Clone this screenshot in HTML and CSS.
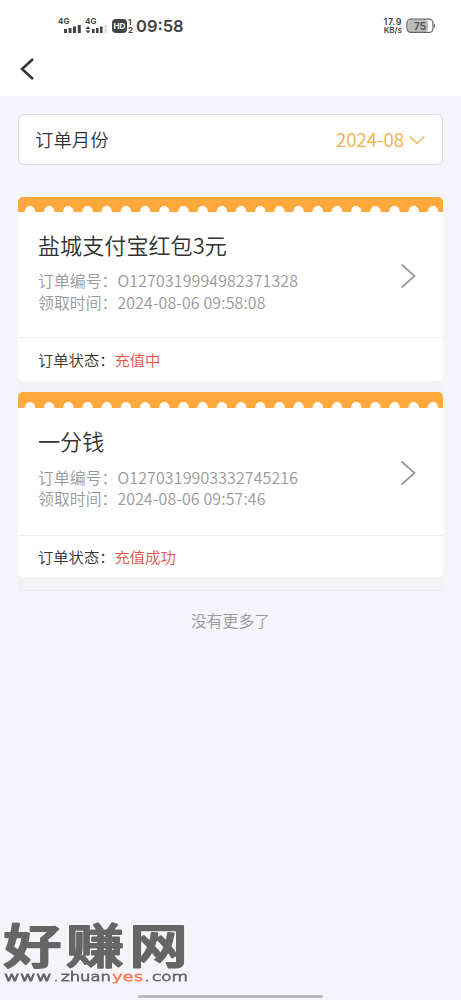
FILE: index.html
```
<!DOCTYPE html>
<html lang="zh-CN">
<head>
  <meta charset="UTF-8">
  <meta name="viewport" content="width=device-width, initial-scale=1.0">
  <title>订单</title>
  <link rel="stylesheet" href="styles.css">
</head>
<body>
  <div class="status-bar">
    <svg class="signal" width="50" height="18" viewBox="0 0 50 18">
      <text x="0" y="7">4G</text>
      <path d="M6 12h3v4h-3zM10.500 11h3v5h-3zM15 9.500h3v6.500h-3zM19.800 8h3v8h-3z"/>
      <text x="27" y="7">4G</text>
      <path d="M27.500 12l2.500-3 2.500 3zM27.500 13.500l2.500 3 2.500-3zM34 12h2.600v4h-2.600zM38 11h2.600v5h-2.600zM42 9.500h2.600v6.500h-2.600z"/>
      <path class="weak" d="M46.500 8h2.600v8h-2.600z"/>
    </svg>
    <span class="hd">HD</span>
    <span class="sims"><span>1</span><span>2</span></span>
    <span class="clock">09:58</span>
    <span class="speed"><span>17.9</span><span class="unit">KB/s</span></span>
    <svg class="battery" width="30" height="16" viewBox="0 0 30 16">
      <rect class="level" x="2" y="2" width="20" height="12" rx="3"/>
      <rect class="shell" x="1" y="1.200" width="26" height="13.200" rx="4"/>
      <path d="M28 5.500q2 2.300 0 4.600z"/>
      <text x="14" y="11.500">75</text>
    </svg>
  </div>

  <div class="nav">
    <svg width="17" height="24" viewBox="0 0 17 24">
      <path d="M15 2L4 12l11 10"/>
    </svg>
  </div>

  <div class="container">
    <div class="month">
      <span class="month-label">订单月份</span>
      <span class="month-value">2024-08</span>
      <svg class="arrow-down" width="16" height="10" viewBox="0 0 16 10">
        <path d="M.7 1.500L8 8.500l7.300-7"/>
      </svg>
    </div>

    <div class="orders">
      <div class="card">
        <div class="stamp"></div>
        <div class="main">
          <div class="info">
            <h2>盐城支付宝红包3元</h2>
            <p>订单编号：<span>O1270319994982371328</span></p>
            <p>领取时间：<span>2024-08-06 09:58:08</span></p>
          </div>
          <svg class="arrow" width="16" height="26" viewBox="0 0 16 26">
            <path d="M1.500 1.500L14.500 13 1.500 24.500"/>
          </svg>
        </div>
        <div class="state">订单状态：<span>充值中</span></div>
      </div>

      <div class="card second">
        <div class="stamp"></div>
        <div class="main">
          <div class="info">
            <h2>一分钱</h2>
            <p>订单编号：<span>O1270319903332745216</span></p>
            <p>领取时间：<span>2024-08-06 09:57:46</span></p>
          </div>
          <svg class="arrow" width="16" height="26" viewBox="0 0 16 26">
            <path d="M1.500 1.500L14.500 13 1.500 24.500"/>
          </svg>
        </div>
        <div class="state">订单状态：<span>充值成功</span></div>
      </div>
    </div>

    <p class="no-more">没有更多了</p>
  </div>

  <svg class="watermark" width="196" height="80" viewBox="0 0 196 80">
    <text class="name" transform="translate(0 54.500) scale(1 .81)" x="3.500 66 129.500" y="0">好赚网</text>
    <g class="site">
      <text x="4" y="73" textLength="48" lengthAdjust="spacingAndGlyphs">www</text>
      <text x="54" y="73">.</text>
      <text x="61" y="73" textLength="50" lengthAdjust="spacingAndGlyphs">zhuan</text>
      <text class="yes" x="112" y="73" textLength="31" lengthAdjust="spacingAndGlyphs">yes</text>
      <text x="145" y="73">.</text>
      <text x="152" y="73" textLength="36" lengthAdjust="spacingAndGlyphs">com</text>
    </g>
  </svg>
  <div class="home-bar"></div>
</body>
</html>
```
FILE: styles.css
```
* {
  box-sizing: border-box;
}

body {
  margin: 0;
  height: 1000px;
  position: relative;
  overflow: hidden;
  font-family: 'Noto Sans CJK SC', sans-serif;
  font-weight: 350;
  background-color: #f4f4fa;
  color: #333;
}

svg {
  display: block;
}

h2,
p {
  margin: 0;
  font-weight: inherit;
}

/* Status bar */
.status-bar {
  display: flex;
  align-items: center;
  height: 52px;
  padding: 0 25px 0 58px;
  background-color: #fff;
  font-family: Inter, sans-serif;
  font-weight: 700;
  color: #444;
}

.signal {
  fill: #444;
  font-size: 8px;
}

.signal .weak {
  fill: #ddd;
}

.hd {
  width: 15px;
  height: 14px;
  margin-left: 4px;
  border-radius: 4px;
  background-color: #444;
  color: #fff;
  font-size: 8px;
  line-height: 14px;
  text-align: center;
}

.sims {
  display: flex;
  flex-direction: column;
  margin-left: 1px;
  font-size: 8px;
  line-height: 8px;
}

.clock {
  margin-left: 3px;
  font-size: 16.5px;
  font-weight: 600;
}

.speed {
  display: flex;
  flex-direction: column;
  align-items: flex-end;
  margin-left: auto;
  font-size: 9px;
  line-height: 8px;
  font-weight: 600;
}

.speed span:first-child {
  letter-spacing: 0.5px;
}

.speed .unit {
  font-size: 8px;
}

.battery {
  margin-left: 4px;
  fill: #555;
}

.battery .level {
  fill: #bbb;
}

.battery .shell {
  fill: none;
  stroke: #666;
  stroke-width: 1.3;
}

.battery text {
  font-size: 10px;
  text-anchor: middle;
}

/* Nav */
.nav {
  height: 44px;
  padding: 5px 0 0 18px;
  background-color: #fff;
}

.nav path {
  fill: none;
  stroke: #333;
  stroke-width: 2.5;
}

.container {
  padding: 18px 18px 0;
}

/* Month picker */
.month {
  display: flex;
  align-items: center;
  height: 51px;
  padding: 0 17px 2px 16px;
  border: 1px solid #dcdce6;
  border-radius: 6px;
  background-color: #fff;
}

.month-label {
  flex: 1;
  font-size: 18.4px;
}

.month-value {
  font-size: 18.7px;
  color: #f5ac49;
}

.arrow-down {
  margin: 2px 0 0 5px;
}

.arrow-down path {
  fill: none;
  stroke: #f5ac49;
  stroke-width: 1.2;
}

/* Orders */
.orders {
  margin-top: 32px;
  padding-bottom: 13px;
  border-bottom: 1px solid #ececef;
  background: linear-gradient(#f3f3f5, #f3f3f5) 0 100% / 100% 220px no-repeat;
}

.card {
  height: 184px;
  display: flex;
  flex-direction: column;
  border-radius: 5px;
  overflow: hidden;
  background-color: #fff;
}

.stamp {
  height: 15px;
  background: radial-gradient(circle at 12px 14px, #fff 4.7px, #ffa83b 5.3px) 0 0 / 19.2px 100%;
}

.main {
  display: flex;
  align-items: center;
  height: 126px;
  padding: 0 27px 0 20px;
  border-bottom: 1px solid #efeff2;
}

.info {
  flex: 1;
  padding-bottom: 8px;
}

.info h2 {
  font-size: 22.1px;
  line-height: 32px;
  margin-bottom: 10px;
}

.info p {
  font-size: 15.9px;
  line-height: 22px;
  color: #999;
}

.info span {
  letter-spacing: 0.16px;
}

.arrow {
  margin-top: 3px;
}

.arrow path {
  fill: none;
  stroke: #999;
  stroke-width: 1.7;
}

.state {
  flex: 1;
  display: flex;
  align-items: center;
  padding: 0 0 2px 20px;
  font-size: 15.3px;
}

.state span {
  color: #df5543;
}

.second {
  height: 185px;
  margin-top: 11px;
}

.second .stamp {
  height: 16px;
  background-image: radial-gradient(circle at 12px 15px, #fff 4.7px, #ffa83b 5.3px);
}

.second .main {
  height: 128px;
}

.second .info {
  padding-bottom: 11px;
}

.second .info h2 {
  margin-bottom: 11px;
}

.second .info p {
  line-height: 21px;
}

.no-more {
  margin-top: 18px;
  font-size: 15.8px;
  line-height: 24px;
  text-align: center;
  color: #999;
}

/* Overlays */
.watermark {
  position: absolute;
  left: 0;
  top: 908px;
  filter: drop-shadow(0 0 1px #fff);
}

.watermark text {
  fill: #666;
}

.watermark .name {
  font-size: 58px;
  font-weight: 500;
  stroke: #666;
  stroke-width: 2.6px;
  stroke-linejoin: round;
}

.watermark .site text {
  font-family: 'DejaVu Sans', sans-serif;
  font-size: 12.5px;
  stroke: #666;
  stroke-width: 0.9px;
}

.watermark .site .yes {
  fill: #ff7a55;
  stroke: #ff7a55;
}

.home-bar {
  position: absolute;
  left: 138px;
  top: 995px;
  width: 185px;
  height: 3px;
  border-radius: 2px;
  background-color: #b8b8bc;
}
```
